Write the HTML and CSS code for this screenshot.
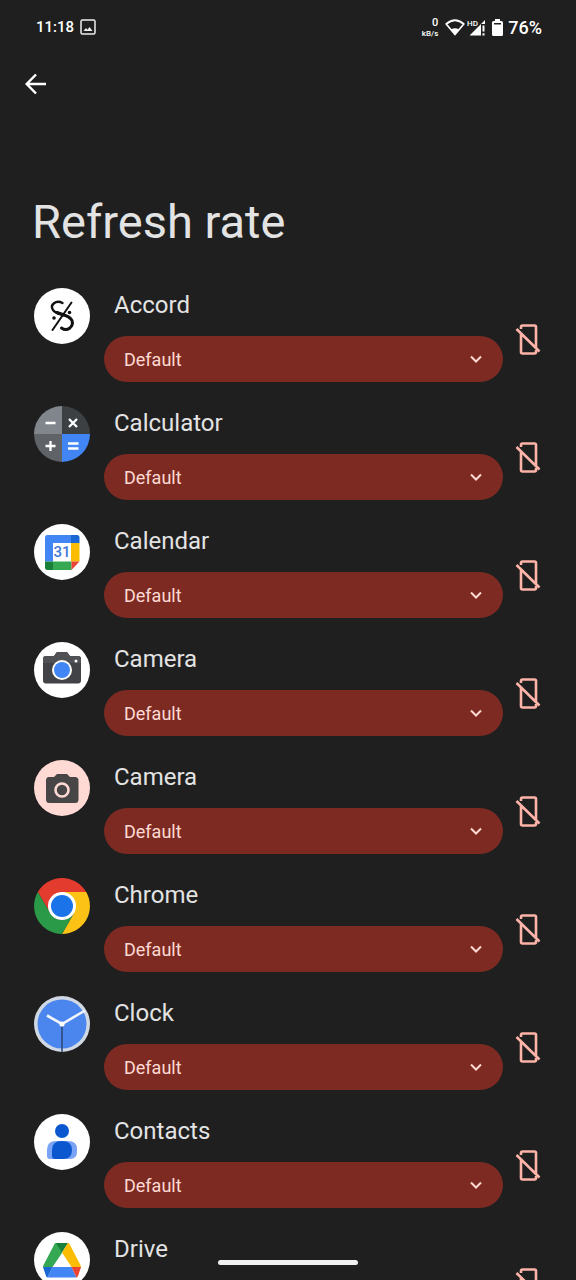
FILE: index.html
```html
<!DOCTYPE html>
<html lang="en">
<head>
    <meta charset="UTF-8">
    <meta name="viewport" content="width=device-width, initial-scale=1.0">
    <title>Refresh rate</title>
    <link rel="stylesheet" href="styles.css">
</head>
<body>

<!-- shared icons -->
<svg class="sprite" aria-hidden="true">
    <symbol id="chevron" viewBox="0 0 12 8">
        <path d="M1 1.500l5 5 5-5" fill="none" stroke="currentColor" stroke-width="2"/>
    </symbol>
    <symbol id="no-phone" viewBox="0 0 26 32">
        <path d="M6 5V3q0-1.500 1.500-1.500h12q1.500 0 1.500 1.500v22M6 9.500v18.500q0 1.500 1.500 1.500h12q1.500 0 1.500-1.500v-2M1.500 5l23 22.500" fill="none" stroke="currentColor" stroke-width="2.600"/>
    </symbol>
</svg>

<div class="screen">
    <!-- status bar -->
    <div class="status-bar">
        <span class="clock">11:18</span>
        <svg class="image-icon" viewBox="0 0 16 16">
            <rect x="1" y="1" width="14" height="14" rx="1.500" fill="none" stroke="#eee" stroke-width="1.500"/>
            <path d="M3.500 12l2.500-3 1.500 1.700L9.500 8l3 4z" fill="#eee"/>
        </svg>
        <div class="net-speed"><span class="speed">0</span><span class="unit">kB/s</span></div>
        <svg class="wifi-icon" viewBox="0 0 20 17">
            <path d="M1.200 5Q10-2.500 18.800 5L10 15.500z" fill="none" stroke="#fff" stroke-width="1.700" stroke-linejoin="round"/>
            <path d="M6 10.500q4-2.500 8 0L10 15.500z" fill="#fff"/>
        </svg>
        <svg class="signal-icon" viewBox="0 0 20 17">
            <text x="0" y="7" class="hd">HD</text>
            <path d="M2.500 16.500L14 5v11.500zM14 5l4-4v4h-4zM15.500 6.500h2v6h-2zM15.500 14.200h2v2.300h-2z" fill="#fff"/>
        </svg>
        <svg class="battery-icon" viewBox="0 0 11 17">
            <path d="M3 0h5v2h1.500q1.500 0 1.500 1.500v12q0 1.500-1.500 1.500h-8Q0 17 0 15.500v-12Q0 2 1.500 2H3z" fill="#fff"/>
            <path d="M2 4h7v1.500H2z" fill="#1f1f1f"/>
        </svg>
        <span class="battery">76%</span>
    </div>

    <header>
        <button class="back-btn" aria-label="Back">
            <svg viewBox="0 0 22 22"><path d="M21 11H2M11 1.500L1.700 11l9.300 9.500" fill="none" stroke="#fff" stroke-width="2.500"/></svg>
        </button>
        <h1>Refresh rate</h1>
    </header>

    <!-- app list -->
    <main class="app-list">
        <div class="app">
            <svg class="app-icon" viewBox="0 0 56 56">
                <circle cx="28" cy="28" r="28" fill="#fff"/>
                <g fill="none" stroke="#111" stroke-linecap="round">
                    <path d="M37.500 14.500L18.500 42" stroke-width="2"/>
                    <path d="M28.500 15C22 11.500 15.500 17 19 22c3 4 7.500 4 11 5.500" stroke-width="2.400"/>
                    <path d="M23 24.500c6 2.500 12.500 2.500 15 8 2 6.500-5 11.500-10.500 7.500" stroke-width="3"/>
                </g>
                <circle cx="20" cy="30" r="1.800" fill="#111"/>
                <circle cx="35.500" cy="24.500" r="1.800" fill="#111"/>
            </svg>
            <div class="app-body">
                <label for="rate-accord">Accord</label>
                <div class="select-box">
                    <select id="rate-accord"><option>Default</option></select>
                    <svg><use href="#chevron"/></svg>
                </div>
            </div>
            <button class="phone-btn" aria-label="Reset Accord"><svg><use href="#no-phone"/></svg></button>
        </div>

        <div class="app">
            <svg class="app-icon" viewBox="0 0 56 56">
                <path d="M28 28V0A28 28 0 0 0 0 28z" fill="#80868b"/>
                <path d="M28 28h28A28 28 0 0 0 28 0z" fill="#3c4043"/>
                <path d="M28 28H0a28 28 0 0 0 28 28z" fill="#5f6368"/>
                <path d="M28 28v28a28 28 0 0 0 28-28z" fill="#4285f4"/>
                <path d="M11.500 17h10M11.500 40h10M16.500 35v10M35 13l8 8M43 13l-8 8M34 37.500h10.500M34 42.500h10.500" stroke="#fff" stroke-width="2.300"/>
            </svg>
            <div class="app-body">
                <label for="rate-calculator">Calculator</label>
                <div class="select-box">
                    <select id="rate-calculator"><option>Default</option></select>
                    <svg><use href="#chevron"/></svg>
                </div>
            </div>
            <button class="phone-btn" aria-label="Reset Calculator"><svg><use href="#no-phone"/></svg></button>
        </div>

        <div class="app">
            <svg class="app-icon" viewBox="0 0 56 56">
                <circle cx="28" cy="28" r="28" fill="#fff"/>
                <path d="M13.500 11H37v8H19v18.500h-8V13.500Q11 11 13.500 11z" fill="#4285f4"/>
                <path d="M37 11h6q2.500 0 2.500 2.500V19H37z" fill="#1967d2"/>
                <path d="M37 19h8.500v18.500H37z" fill="#fbbc04"/>
                <path d="M19 37.500h18.500V46H19z" fill="#34a853"/>
                <path d="M11 37.500h8V46h-5.500Q11 46 11 43.500z" fill="#188038"/>
                <path d="M37.500 37.500h8l-8 8.500z" fill="#ea4335"/>
                <text x="28" y="33" class="day">31</text>
            </svg>
            <div class="app-body">
                <label for="rate-calendar">Calendar</label>
                <div class="select-box">
                    <select id="rate-calendar"><option>Default</option></select>
                    <svg><use href="#chevron"/></svg>
                </div>
            </div>
            <button class="phone-btn" aria-label="Reset Calendar"><svg><use href="#no-phone"/></svg></button>
        </div>

        <div class="app">
            <svg class="app-icon" viewBox="0 0 56 56">
                <circle cx="28" cy="28" r="28" fill="#fff"/>
                <path d="M12 14h8l3-4h10l3 4h8q3 0 3 3v21.500q0 3-3 3H12q-3 0-3-3V17q0-3 3-3z" fill="#424346"/>
                <path d="M12 14h8l3-4h10l3 4h8q3 0 3 3v4H9v-4q0-3 3-3z" fill="#505155"/>
                <circle cx="28" cy="28" r="10" fill="#fff"/>
                <circle cx="28" cy="28" r="8" fill="#4285f4"/>
                <circle cx="42" cy="19" r="1.500" fill="#fff"/>
            </svg>
            <div class="app-body">
                <label for="rate-camera">Camera</label>
                <div class="select-box">
                    <select id="rate-camera"><option>Default</option></select>
                    <svg><use href="#chevron"/></svg>
                </div>
            </div>
            <button class="phone-btn" aria-label="Reset Camera"><svg><use href="#no-phone"/></svg></button>
        </div>

        <div class="app">
            <svg class="app-icon" viewBox="0 0 56 56">
                <circle cx="28" cy="28" r="28" fill="#ffdad5"/>
                <path d="M15 17h5l3-3h10l3 3h5q3.500 0 3.500 3.500v19q0 3.500-3.500 3.500H15.500Q12 43 12 39.500v-19Q12 17 15 17z" fill="#474545"/>
                <circle cx="28" cy="30" r="6.500" fill="none" stroke="#ffdad5" stroke-width="2.600"/>
            </svg>
            <div class="app-body">
                <label for="rate-camera-2">Camera</label>
                <div class="select-box">
                    <select id="rate-camera-2"><option>Default</option></select>
                    <svg><use href="#chevron"/></svg>
                </div>
            </div>
            <button class="phone-btn" aria-label="Reset Camera"><svg><use href="#no-phone"/></svg></button>
        </div>

        <div class="app">
            <svg class="app-icon" viewBox="0 0 56 56">
                <path d="M28 28L16 35 3.800 14a28 28 0 0 1 48.400 0H28z" fill="#e33b2e"/>
                <path d="M28 14h24.200A28 28 0 0 1 28 56l12-21z" fill="#fcc216"/>
                <path d="M3.800 14L16 35q4.500 7 12 7 6 0 12-7L28 56A28 28 0 0 1 3.800 14z" fill="#2a9a48"/>
                <circle cx="28" cy="28" r="14" fill="#fff"/>
                <circle cx="28" cy="28" r="11" fill="#1a73e8"/>
            </svg>
            <div class="app-body">
                <label for="rate-chrome">Chrome</label>
                <div class="select-box">
                    <select id="rate-chrome"><option>Default</option></select>
                    <svg><use href="#chevron"/></svg>
                </div>
            </div>
            <button class="phone-btn" aria-label="Reset Chrome"><svg><use href="#no-phone"/></svg></button>
        </div>

        <div class="app">
            <svg class="app-icon" viewBox="0 0 56 56">
                <circle cx="28" cy="28" r="28" fill="#cfd8e3"/>
                <circle cx="28" cy="28" r="24.500" fill="#4a86ee"/>
                <path d="M28 28v28" stroke="#2c4675" stroke-width="1.500"/>
                <path d="M13 19.500L28 28l23-13.500" fill="none" stroke="#f1f4fa" stroke-width="2.600"/>
                <circle cx="28" cy="28" r="2.600" fill="#fff"/>
            </svg>
            <div class="app-body">
                <label for="rate-clock">Clock</label>
                <div class="select-box">
                    <select id="rate-clock"><option>Default</option></select>
                    <svg><use href="#chevron"/></svg>
                </div>
            </div>
            <button class="phone-btn" aria-label="Reset Clock"><svg><use href="#no-phone"/></svg></button>
        </div>

        <div class="app">
            <svg class="app-icon" viewBox="0 0 56 56">
                <circle cx="28" cy="28" r="28" fill="#fff"/>
                <circle cx="28" cy="17" r="7" fill="#0b57d0"/>
                <path d="M22 27h12q9 0 9 8v3q0 7-7 7H16q-3 0-3-3v-6q0-9 9-9z" fill="#7aa3f5"/>
                <path d="M28 27q10 0 10 9 0 9-9 9h-8q-3 0-3-3v-6q0-9 10-9z" fill="#0b57d0"/>
            </svg>
            <div class="app-body">
                <label for="rate-contacts">Contacts</label>
                <div class="select-box">
                    <select id="rate-contacts"><option>Default</option></select>
                    <svg><use href="#chevron"/></svg>
                </div>
            </div>
            <button class="phone-btn" aria-label="Reset Contacts"><svg><use href="#no-phone"/></svg></button>
        </div>

        <div class="app">
            <svg class="app-icon" viewBox="0 0 56 56">
                <circle cx="28" cy="28" r="28" fill="#fff"/>
                <path d="M22 11h6v10l-9.500 14H9q0-1 .7-2.300L20.500 12q.5-1 1.500-1z" fill="#34a853"/>
                <path d="M22 11h12l-6 9.500z" fill="#188038"/>
                <path d="M34 11q1 0 1.500 1l10.800 20.700q.7 1.300.7 2.300h-9.500L28 20.500z" fill="#fbbc04"/>
                <path d="M18.500 35h19l5 10.500H13.500z" fill="#4285f4"/>
                <path d="M9 35h9.500l-5 10.500q-1-.5-1.500-1.500z" fill="#1967d2"/>
                <path d="M37.500 35H47l-3 9q-.5 1-1.500 1.500z" fill="#ea4335"/>
            </svg>
            <div class="app-body">
                <label for="rate-drive">Drive</label>
                <div class="select-box">
                    <select id="rate-drive"><option>Default</option></select>
                    <svg><use href="#chevron"/></svg>
                </div>
            </div>
            <button class="phone-btn" aria-label="Reset Drive"><svg><use href="#no-phone"/></svg></button>
        </div>
    </main>

    <div class="nav-handle"></div>
</div>

</body>
</html>
```
FILE: styles.css
```css
* {
    box-sizing: border-box;
}
body {
    margin: 0;
    background-color: #1f1f1f;
    color: #e3e3e3;
    font-family: Roboto, sans-serif;
}
button {
    padding: 0;
    border: none;
    background: none;
    cursor: pointer;
}
svg {
    display: block;
}
.sprite {
    display: none;
}
.screen {
    position: relative;
    display: flex;
    flex-direction: column;
    height: 100vh;
    overflow: hidden;
}

/* status bar */
.status-bar {
    display: flex;
    align-items: center;
    height: 54px;
    padding: 0 34px 0 36px;
    color: #fff;
    font-weight: 500;
    flex-shrink: 0;
}
.clock {
    font-size: 15px;
}
.image-icon {
    width: 16px;
    height: 16px;
    margin-left: 6px;
}
.net-speed {
    display: flex;
    flex-direction: column;
    align-items: flex-end;
    margin-left: auto;
}
.speed {
    font-size: 11px;
    line-height: 12px;
}
.unit {
    font-size: 8px;
    line-height: 9px;
}
.wifi-icon {
    width: 20px;
    height: 17px;
    margin-left: 7px;
}
.signal-icon {
    width: 20px;
    height: 17px;
    margin-left: 2px;
}
.hd {
    font-size: 8px;
    fill: #fff;
}
.battery-icon {
    width: 11px;
    height: 17px;
    margin: 0 5px;
}
.battery {
    font-size: 18px;
}

/* title */
header {
    padding: 6px 12px 38px;
    flex-shrink: 0;
}
.back-btn {
    display: flex;
    align-items: center;
    justify-content: center;
    width: 48px;
    height: 48px;
}
.back-btn svg {
    width: 22px;
    height: 22px;
}
h1 {
    margin: 86px 0 0 20px;
    font-size: 47px;
    font-weight: 400;
    line-height: 56px;
}

/* app list */
.app-list {
    flex: 1;
    min-height: 0;
    overflow-y: auto;
    scrollbar-width: none;
}
.app {
    display: grid;
    grid-template-columns: 56px 1fr 50px;
    padding: 0 23px 24px 34px;
}
.app-icon {
    width: 56px;
    height: 56px;
}
.day {
    font-size: 15px;
    font-weight: 500;
    text-anchor: middle;
    fill: #3c78d8;
}
.app-body {
    margin-left: 14px;
}
.app-body label {
    display: block;
    padding-left: 10px;
    margin-bottom: 14px;
    font-size: 24px;
    line-height: 34px;
}
.select-box {
    display: grid;
    align-items: center;
}
.select-box select,
.select-box svg {
    grid-area: 1 / 1;
}
.select-box select {
    width: 100%;
    height: 46px;
    padding: 0 20px;
    border: none;
    border-radius: 23px;
    background-color: #7d2b22;
    color: #ffdad5;
    font-family: inherit;
    font-size: 18px;
    appearance: none;
}
.select-box svg {
    width: 12px;
    height: 8px;
    margin-right: 21px;
    justify-self: end;
    color: #ffdad5;
    pointer-events: none;
}
.phone-btn {
    display: flex;
    align-items: center;
    justify-content: center;
    align-self: center;
    width: 50px;
    height: 48px;
    margin-top: 10px;
    color: #ffb4a9;
}
.phone-btn svg {
    width: 26px;
    height: 32px;
}

/* gesture bar */
.nav-handle {
    position: absolute;
    bottom: 15px;
    left: 50%;
    width: 140px;
    height: 5px;
    margin-left: -70px;
    border-radius: 3px;
    background-color: #f1f1f1;
}
```
